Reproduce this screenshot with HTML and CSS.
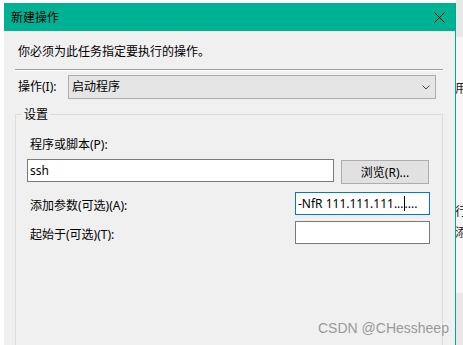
FILE: index.html
```html
<!DOCTYPE html>
<html>
<head>
    <meta charset="UTF-8">
    <title>新建操作</title>
    <link rel="stylesheet" href="styles.css">
</head>
<body>
    <div class="screen">
        <div class="dialog">
            <div class="titlebar">
                <span class="title">新建操作</span>
                <svg class="close" width="11" height="11" viewBox="0 0 11 11">
                    <path d="M0.5 0.5 L10.5 10.5 M10.5 0.5 L0.5 10.5" stroke="#111" stroke-width="1" fill="none"/>
                </svg>
            </div>

            <div class="content">
                <p class="hint">你必须为此任务指定要执行的操作。</p>
                <div class="separator"></div>

                <div class="action-row">
                    <label class="action-label">操作(I):</label>
                    <div class="combo">
                        <span>启动程序</span>
                        <svg class="chevron" width="8" height="5" viewBox="0 0 8 5">
                            <path d="M0.5 0.5 L4 4 L7.5 0.5" stroke="#444" stroke-width="1" fill="none"/>
                        </svg>
                    </div>
                </div>

                <fieldset class="group">
                    <legend>设置</legend>
                    <div class="field-label">程序或脚本(P):</div>
                    <div class="program-row">
                        <input type="text" class="textbox program" value="ssh">
                        <button class="browse">浏览(R)...</button>
                    </div>
                    <div class="option-row first">
                        <span class="option-label">添加参数(可选)(A):</span>
                        <div class="textbox small focused">-NfR 111.111.111...<span class="caret"></span>....</div>
                    </div>
                    <div class="option-row">
                        <span class="option-label">起始于(可选)(T):</span>
                        <div class="textbox small"></div>
                    </div>
                </fieldset>
            </div>
        </div>

        <div class="behind">
            <div class="behind-top"></div>
            <div class="behind-text">
                <span class="ch ch-1">用</span>
                <span class="ch ch-2">行</span>
                <span class="ch ch-3">添</span>
            </div>
            <div class="behind-bottom"></div>
        </div>

        <div class="watermark">CSDN @CHessheep</div>
    </div>
</body>
</html>
```

FILE: styles.css
```css
html, body {
    margin: 0;
    padding: 0;
    background-color: #fff;
}
body {
    font-family: "Noto Sans", "Noto Sans CJK SC", sans-serif;
    font-size: 12px;
    line-height: 16px;
    color: #000;
}
.screen {
    position: relative;
    display: flex;
    width: 463px;
    height: 345px;
    overflow: hidden;
}
.dialog {
    width: 451px;
    height: 342px;
    margin: 3px 0 0 4px;
    border-right: 1px solid #00a88c;
    background-color: #f0f0f0;
    display: flex;
    flex-direction: column;
    overflow: hidden;
}
.titlebar {
    height: 28px;
    background-color: #00b294;
    display: flex;
    align-items: center;
    justify-content: space-between;
    padding: 0 10px 0 7px;
    flex-shrink: 0;
}
.title {
    font-family: "Noto Sans CJK SC", sans-serif;
}
.close {
    display: block;
    margin-top: 1px;
}
.content {
    padding: 12px 12px 0 11px;
    flex: 1;
    display: flex;
    flex-direction: column;
}
.hint {
    margin: 0 0 0 3px;
    font-family: "Noto Sans CJK SC", sans-serif;
}
.separator {
    margin-top: 10px;
    border-top: 1px solid #a0a0a0;
    border-bottom: 1px solid #fff;
}
.action-row {
    display: flex;
    align-items: center;
    margin-top: 4px;
}
.action-label {
    width: 50px;
    padding-left: 3px;
}
.combo {
    width: 366px;
    height: 22px;
    border: 1px solid #adadad;
    background-color: #e5e5e5;
    display: flex;
    align-items: center;
    justify-content: space-between;
    padding: 0 5px 0 3px;
    box-sizing: content-box;
    width: 358px;
}
.chevron {
    display: block;
}
.group {
    margin: 7px 0 0 0;
    padding: 15px 12px 0 11px;
    border: 1px solid #dcdcdc;
    flex: 1;
    min-height: 240px;
}
.group legend {
    padding: 0 2px;
    margin-left: -5px;
    font-family: "Noto Sans CJK SC", sans-serif;
}
.field-label {
    padding-left: 3px;
}
.program-row {
    display: flex;
    align-items: flex-start;
    margin-top: 6px;
}
.textbox {
    box-sizing: border-box;
    height: 23px;
    border: 1px solid #7a7a7a;
    background-color: #fff;
    font-family: "Noto Sans", "Noto Sans CJK SC", sans-serif;
    font-size: 12px;
    color: #000;
    padding: 0 2px;
    margin: 0;
    outline: none;
}
.program {
    width: 307px;
}
.browse {
    width: 88px;
    height: 24px;
    margin: 1px 0 0 7px;
    padding: 0;
    border: 1px solid #adadad;
    background-color: #e1e1e1;
    font-family: "Noto Sans", "Noto Sans CJK SC", sans-serif;
    font-size: 12px;
    color: #000;
}
.option-row {
    display: flex;
    justify-content: space-between;
    align-items: flex-start;
    margin-top: 6px;
}
.option-row.first {
    margin-top: 8px;
}
.option-label {
    padding: 6px 0 0 3px;
}
.small {
    width: 135px;
    line-height: 21px;
    white-space: nowrap;
    overflow: hidden;
}
.focused {
    border-color: #0078d7;
}
.caret {
    display: inline-block;
    width: 1px;
    height: 15px;
    background-color: #000;
    vertical-align: -3px;
}
.behind {
    flex: 1;
    display: flex;
    flex-direction: column;
    background-color: #f6f6f6;
    overflow: hidden;
}
.behind-top {
    height: 37px;
    background-color: #e8e8e8;
}
.behind-text {
    flex: 1;
    display: flex;
    flex-direction: column;
    font-family: "Noto Sans CJK SC", sans-serif;
    color: #222;
}
.ch {
    margin-left: -1px;
    white-space: nowrap;
}
.ch-1 { margin-top: 43px; }
.ch-2 { margin-top: 107px; }
.ch-3 { margin-top: 5px; }
.behind-bottom {
    height: 52px;
    background-color: #e8e8e8;
}
.watermark {
    position: absolute;
    left: 318px;
    top: 320px;
    font-family: "Liberation Sans", Arial, sans-serif;
    font-size: 14px;
    line-height: 16px;
    color: #9a9a9a;
}
```
